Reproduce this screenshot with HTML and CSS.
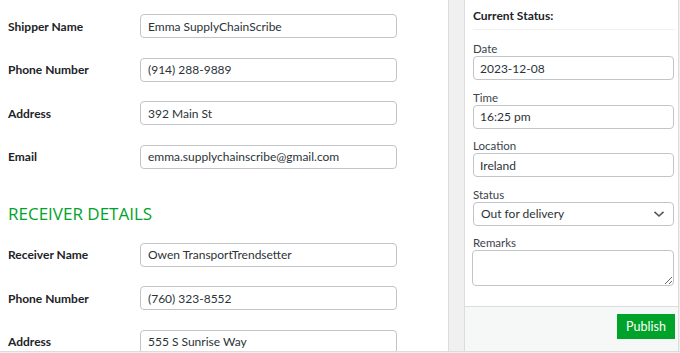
FILE: index.html
```html
<!DOCTYPE html>
<html lang="en">
<head>
<meta charset="utf-8">
<title>Shipment</title>
<link rel="stylesheet" href="styles.css">
</head>
<body>
<div class="page">
  <main class="details">
    <div class="form-grid">
      <label class="lbl">Shipper Name</label>
      <input class="field" type="text" value="Emma SupplyChainScribe">
      <label class="lbl">Phone Number</label>
      <input class="field" type="text" value="(914) 288-9889">
      <label class="lbl">Address</label>
      <input class="field" type="text" value="392 Main St">
      <label class="lbl">Email</label>
      <input class="field" type="text" value="emma.supplychainscribe@gmail.com">
    </div>
    <h2 class="section-title">RECEIVER DETAILS</h2>
    <div class="form-grid">
      <label class="lbl">Receiver Name</label>
      <input class="field" type="text" value="Owen TransportTrendsetter">
      <label class="lbl">Phone Number</label>
      <input class="field" type="text" value="(760) 323-8552">
      <label class="lbl">Address</label>
      <input class="field" type="text" value="555 S Sunrise Way">
    </div>
  </main>
  <div class="gutter"></div>
  <aside class="status-box">
    <div class="status-body">
      <h3 class="status-title">Current Status:</h3>
      <div class="group">
        <label class="small-lbl">Date</label>
        <input class="side-field" type="text" value="2023-12-08">
      </div>
      <div class="group">
        <label class="small-lbl">Time</label>
        <input class="side-field" type="text" value="16:25 pm">
      </div>
      <div class="group">
        <label class="small-lbl">Location</label>
        <input class="side-field" type="text" value="Ireland">
      </div>
      <div class="group">
        <label class="small-lbl">Status</label>
        <div class="select">
          <span>Out for delivery</span>
          <svg class="chev" width="12" height="8" viewBox="0 0 12 8"><path d="M1.5 1.8 L6 6 L10.5 1.8" fill="none" stroke="#50575e" stroke-width="1.6"/></svg>
        </div>
      </div>
      <div class="group">
        <label class="small-lbl">Remarks</label>
        <textarea class="remarks"></textarea>
      </div>
    </div>
    <div class="status-footer">
      <button class="publish" type="button">Publish</button>
    </div>
  </aside>
</div>
</body>
</html>
```

FILE: styles.css
```css
* { box-sizing: border-box; }
html, body { margin: 0; padding: 0; }
body {
  background: #f0f0f1;
  font-family: "Lato", "Open Sans", sans-serif;
  color: #1d2327;
  width: 680px;
  height: 353px;
  overflow: hidden;
}
.page {
  display: flex;
  height: 352px;
  border-bottom: 1px solid #dcdcde;
  overflow: hidden;
}
.details {
  width: 449px;
  background: #fff;
  border-right: 1px solid #dcdcde;
  padding: 14px 0 0 8px;
  overflow: hidden;
}
.form-grid {
  display: grid;
  grid-template-columns: 132px 257px;
  row-gap: 19.5px;
  align-items: center;
}
.lbl {
  font-size: 12px;
  font-weight: 700;
  color: #1d2327;
}
.field {
  height: 24px;
  border: 1px solid #c3c4c7;
  border-radius: 4px;
  padding: 0 7px;
  font-family: inherit;
  font-size: 12px;
  color: #2c3338;
  background: #fff;
  width: 100%;
}
.section-title {
  margin: 33px 0 17px 0;
  font-family: "Open Sans", sans-serif;
  font-size: 17px;
  line-height: 24px;
  font-weight: 400;
  color: #00a32a;
}
.gutter { width: 15px; }
.status-box {
  width: 215px;
  background: #fff;
  border-left: 1px solid #dcdcde;
  border-right: 1px solid #dcdcde;
  display: flex;
  flex-direction: column;
}
.status-body {
  padding: 8px 3px 0 8px;
  flex: none;
  height: 306px;
}
.status-title {
  margin: 0 0 12px 0;
  font-size: 12px;
  line-height: 16px;
  font-weight: 700;
  padding-bottom: 5px;
  border-bottom: 1px solid #f0f0f1;
}
.group {
  display: flex;
  flex-direction: column;
  margin-bottom: 10.5px;
}
.small-lbl {
  font-size: 11.5px;
  line-height: 14px;
  color: #3c434a;
}
.side-field {
  height: 24px;
  border: 1px solid #c3c4c7;
  border-radius: 4px;
  padding: 0 6px;
  font-family: inherit;
  font-size: 12px;
  color: #2c3338;
  width: 201px;
}
.select {
  height: 24px;
  width: 201px;
  border: 1px solid #c3c4c7;
  border-radius: 4px;
  padding: 0 8px 0 7px;
  font-size: 12px;
  color: #2c3338;
  display: flex;
  align-items: center;
  justify-content: space-between;
}
.remarks {
  width: 202px;
  height: 36px;
  margin-left: -1px;
  border: 1px solid #c3c4c7;
  border-radius: 4px;
  font-family: inherit;
  resize: vertical;
}
.status-footer {
  flex: 1;
  background: #f6f7f7;
  border-top: 1px solid #dcdcde;
  padding: 7px 3px 0 0;
  display: flex;
  justify-content: flex-end;
  align-items: flex-start;
}
.publish {
  background: #00a32a;
  color: #fff;
  border: 0;
  border-radius: 0;
  height: 25px;
  width: 58px;
  font-family: inherit;
  font-size: 12.5px;
  padding: 0;
}
```
